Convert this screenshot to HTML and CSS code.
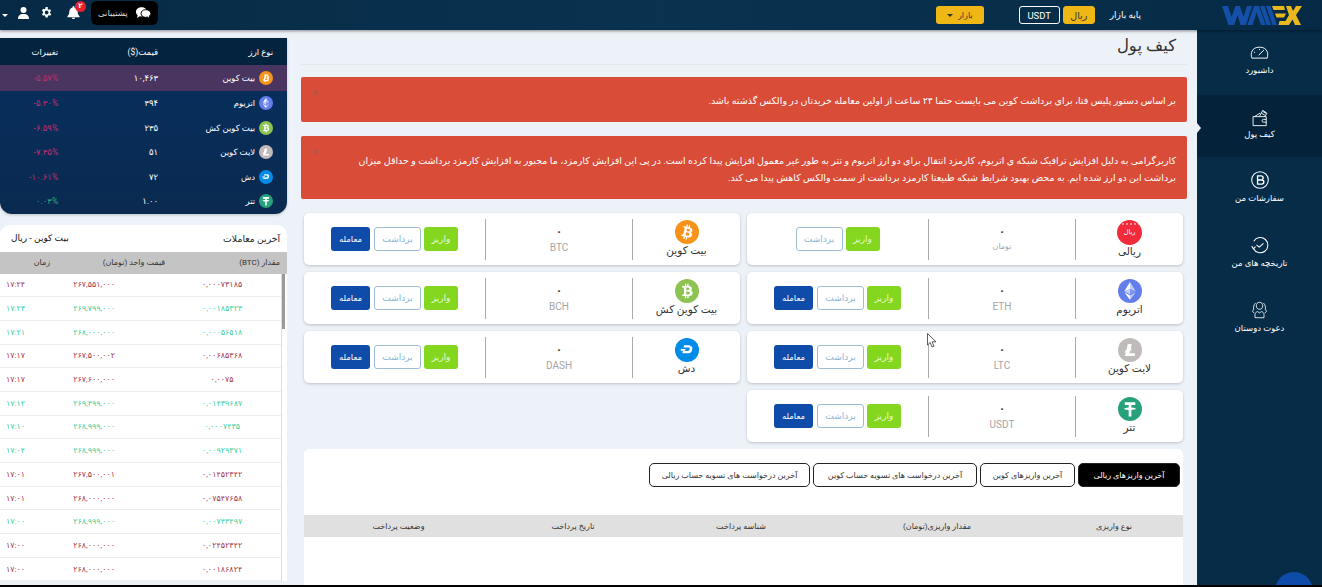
FILE: index.html
```html
<!DOCTYPE html>
<html lang="fa" dir="rtl">
<head>
  <meta charset="UTF-8">
  <title>کیف پول</title>
  <link rel="stylesheet" href="styles.css">
</head>
<body>
  <svg class="sprites" width="0" height="0">
    <symbol id="btc" viewBox="0 0 32 32"><circle cx="16" cy="16" r="16" fill="#f7931a"/><path fill="#fff" d="M23.189 14.02c.314-2.096-1.283-3.223-3.465-3.975l.708-2.84-1.728-.43-.69 2.765c-.454-.114-.92-.22-1.385-.326l.695-2.783L15.596 6l-.708 2.839c-.376-.086-.746-.17-1.104-.26l.002-.009-2.384-.595-.46 1.846s1.283.294 1.256.312c.7.175.826.638.805 1.006l-.806 3.235c.048.012.11.03.18.057l-.183-.045-1.13 4.532c-.086.212-.303.531-.793.41.018.025-1.256-.313-1.256-.313l-.858 1.978 2.25.561c.418.105.828.215 1.231.318l-.715 2.872 1.727.43.708-2.84c.472.127.93.245 1.378.357l-.706 2.828 1.728.43.715-2.866c2.948.558 5.164.333 6.097-2.333.752-2.146-.037-3.385-1.588-4.192 1.13-.26 1.98-1.003 2.207-2.538zm-3.95 5.538c-.533 2.147-4.148.986-5.32.695l.95-3.805c1.172.293 4.929.872 4.37 3.11zm.535-5.569c-.487 1.953-3.495.96-4.47.717l.86-3.45c.975.243 4.118.696 3.61 2.733z"/></symbol>
    <symbol id="bch" viewBox="0 0 32 32"><circle cx="16" cy="16" r="16" fill="#8dc351"/><path fill="#fff" transform="rotate(-14 16 16)" d="M23.189 14.02c.314-2.096-1.283-3.223-3.465-3.975l.708-2.84-1.728-.43-.69 2.765c-.454-.114-.92-.22-1.385-.326l.695-2.783L15.596 6l-.708 2.839c-.376-.086-.746-.17-1.104-.26l.002-.009-2.384-.595-.46 1.846s1.283.294 1.256.312c.7.175.826.638.805 1.006l-.806 3.235c.048.012.11.03.18.057l-.183-.045-1.13 4.532c-.086.212-.303.531-.793.41.018.025-1.256-.313-1.256-.313l-.858 1.978 2.25.561c.418.105.828.215 1.231.318l-.715 2.872 1.727.43.708-2.84c.472.127.93.245 1.378.357l-.706 2.828 1.728.43.715-2.866c2.948.558 5.164.333 6.097-2.333.752-2.146-.037-3.385-1.588-4.192 1.13-.26 1.98-1.003 2.207-2.538zm-3.95 5.538c-.533 2.147-4.148.986-5.32.695l.95-3.805c1.172.293 4.929.872 4.37 3.11zm.535-5.569c-.487 1.953-3.495.96-4.47.717l.86-3.45c.975.243 4.118.696 3.61 2.733z"/></symbol>
    <symbol id="eth" viewBox="0 0 32 32"><circle cx="16" cy="16" r="16" fill="#627eea"/><g fill="#fff"><polygon points="16,4 16,12.9 23.5,16.2" opacity=".6"/><polygon points="16,4 8.5,16.2 16,12.9"/><polygon points="16,22 16,28 23.5,17.6" opacity=".6"/><polygon points="16,22 8.5,17.6 16,28"/><polygon points="16,20.6 23.5,16.2 16,12.9" opacity=".2"/><polygon points="8.5,16.2 16,20.6 16,12.9" opacity=".6"/></g></symbol>
    <symbol id="ltc" viewBox="0 0 32 32"><circle cx="16" cy="16" r="16" fill="#bfbbbb"/><path fill="#fff" d="M10.427 19.214L9 19.768l.688-2.759 1.444-.58L13.213 8h5.129l-1.519 6.196 1.41-.571-.68 2.75-1.427.571-.848 3.483H23L22.127 24H9.252z"/></symbol>
    <symbol id="usdt" viewBox="0 0 32 32"><circle cx="16" cy="16" r="16" fill="#26a17b"/><path fill="#fff" d="M9 7h14v3.6h-5.2v3.3c3.4.2 5.9.9 5.9 1.7s-2.5 1.5-5.9 1.7V26h-3.6v-8.7c-3.4-.2-5.9-.9-5.9-1.7s2.5-1.5 5.9-1.7v-3.3H9z"/></symbol>
    <symbol id="dash" viewBox="0 0 32 32"><circle cx="16" cy="16" r="16" fill="#008ce7"/><path fill="#fff" d="M19.9 9.5H12l-.6 3.2h7.1c1 0 1.3.5 1 1.6l-.3 1.4c-.2 1.1-.7 1.5-1.8 1.5h-7l-.6 3.2h7.9c3 0 4.3-.9 4.8-3.6l.6-2.8c.4-2.6-1.2-3.5-3.2-3.5z"/><path fill="#fff" d="M8 14.6h6l-.5 2.3H7.5z"/></symbol>
  </svg>

  <header class="topbar">
    <svg class="logo" width="80" height="19" viewBox="0 0 80 19">
      <g fill="#1450a8">
        <polygon points="0,0 6,0 9.5,11 13.5,0 18,0 21.5,11 25,0 30,0 24,19 18.5,19 15.5,9 12,19 6.5,19"/>
        <polygon points="25.5,19 32,0 37,0 43.5,19 39,19 34.5,6.5 30.5,19"/>
        <polygon points="38,0 42.5,0 49,19 44.5,19"/>
        <polygon points="44,0 48.5,0 55,19 50.5,19"/>
      </g>
      <g fill="#eab81e">
        <polygon points="50,0 62,0 63,4 51.5,4"/>
        <polygon points="53,7.5 64,7.5 62,11.5 54.5,11.5"/>
        <polygon points="64,0 69,0 71,5 74,0 80,0 74,9 79,19 73,19 70.5,13.5 67,19 56.5,19 57.5,15 63.5,15 67,9"/>
      </g>
    </svg>
    <span class="base-label">پایه بازار</span>
    <div class="base-switch">
      <button class="base-btn base-active">ریال</button>
      <button class="base-btn">USDT</button>
    </div>
    <button class="market-btn">بازار <span class="caret"></span></button>

    <div class="top-tools">
      <button class="support">
        <svg width="17" height="14" viewBox="0 0 17 14"><g transform="matrix(-1 0 0 1 17 0)"><path fill="#fff" d="M10 1c3.5 0 6 2 6 4.8 0 1.500-.7 2.700-1.800 3.500l.8 3-3-1.800C8 10.800 4.500 9 4.500 5.800 4.500 3 7 1 10 1z"/><path fill="#fff" stroke="#000" d="M6 3.500c2.700 0 4.700 1.700 4.700 4s-2 4-4.700 4c-.7 0-1.300-.1-1.900-.3L1.500 13l.6-2.900C1 9.500.5 8.500.5 7.500c0-2.300 2.500-4 5.500-4z"/></g></svg>
        پشتیبانی
      </button>
      <span class="bell">
        <svg width="13" height="13" viewBox="0 0 14 14"><path fill="#fff" d="M7 0c.6 0 1 .4 1 1v.6c2.200.4 3.500 2.200 3.500 4.400 0 3 1 4 2 5v1H.5v-1c1-1 2-2 2-5 0-2.200 1.300-4 3.500-4.400V1c0-.6.4-1 1-1zM5.200 12.700h3.600C8.700 13.500 8 14 7 14s-1.700-.5-1.800-1.300z"/></svg>
        <span class="badge">۲</span>
      </span>
      <svg class="gear" width="13" height="13" viewBox="0 0 24 24"><path fill="#fff" d="M19.400 13c.1-.3.100-.7.100-1s0-.7-.1-1l2.100-1.600-2-3.500-2.500 1c-.5-.4-1.100-.8-1.700-1L15.300 2h-4l-.4 2.900c-.6.200-1.200.6-1.700 1l-2.500-1-2 3.500L6.700 11c-.1.300-.1.700-.1 1s0 .7.100 1l-2.100 1.600 2 3.500 2.500-1c.5.400 1.100.8 1.700 1l.4 2.900h4l.4-2.900c.6-.2 1.200-.6 1.700-1l2.500 1 2-3.500zM13.300 15.500a3.500 3.500 0 1 1 0-7 3.500 3.500 0 0 1 0 7z" transform="translate(-1)"/></svg>
      <svg class="user" width="11" height="12" viewBox="0 0 11 12"><circle cx="5.5" cy="3" r="3" fill="#fff"/><path fill="#fff" d="M0 12c0-3 1.500-5 5.500-5s5.500 2 5.500 5z"/></svg>
      <span class="caret caret-light"></span>
    </div>
  </header>

  <div class="layout">
    <nav class="sidenav">
      <a class="nav-item nav-first">
        <svg width="19" height="18" viewBox="0 0 26 24"><path d="M2.500 19h21c2-6 .5-15-10.500-15S.5 13 2.500 19zM12 15l7-7M5.500 11H7M13 6.500V8" fill="none" stroke="#fff" stroke-width="1.300"/></svg>
        داشبورد
      </a>
      <a class="nav-item nav-active">
        <svg width="18" height="18" viewBox="0 0 26 26"><path d="M3 11h19v13H3zM22 15h-4a2 2 0 0 0 0 4h4M5 11l8-5M12 11l5-9 6 4-3 5M15 6l5 3M17 3.500l5 3" fill="none" stroke="#fff" stroke-width="1.300"/></svg>
        کیف پول
      </a>
      <a class="nav-item">
        <svg width="18" height="18" viewBox="0 0 26 26"><circle cx="13" cy="13" r="12" fill="none" stroke="#fff" stroke-width="1.500"/><path d="M9.500 7h5a2.800 2.800 0 0 1 0 6h-5 6a2.900 2.900 0 0 1 0 6h-6z" fill="none" stroke="#fff" stroke-width="2"/></svg>
        سفارشات من
      </a>
      <a class="nav-item">
        <svg width="18" height="18" viewBox="0 0 26 26"><path d="M3.500 18A11 11 0 1 0 4 7.500M1 14.500l2.500 4 3-3M8 13l4 3 6-5.500" fill="none" stroke="#fff" stroke-width="1.500"/></svg>
        تاریخچه های من
      </a>
      <a class="nav-item">
        <svg width="17" height="18" viewBox="0 0 26 28"><path d="M13 2c-3.500 0-5 2.500-5 5.500 0 3 2 5.500 5 5.500s5-2.500 5-5.500C18 4.500 16.500 2 13 2zM6 26v-5c0-2.500 2-4 4-4.500l3 2 3-2c2 .5 4 2 4 4.500v5zM7 3C4 6 3 10 4 13l-2 3 3 3M19 3c3 3 4 7 3 10l2 3-3 3" fill="none" stroke="#fff" stroke-width="1.300"/></svg>
        دعوت دوستان
      </a>
    </nav>

    <main class="content">
      <h1 class="page-title">کیف پول</h1>

      <div class="alert alert-short">
        <p>بر اساس دستور پلیس فتا، برای برداشت کوین می بایست حتما ۲۴ ساعت از اولین معامله خریدتان در والکس گذشته باشد.</p>
        <span class="alert-close">×</span>
      </div>
      <div class="alert alert-long">
        <p>کاربرگرامی به دلیل افزایش ترافیک شبکه ی اتریوم، کارمزد انتقال برای دو ارز اتریوم و تتر به طور غیر معمول افزایش پیدا کرده است. در پی این افزایش کارمزد، ما مجبور به افزایش کارمزد برداشت و حداقل میزان برداشت این دو ارز شده ایم. به محض بهبود شرایط شبکه طبیعتا کارمزد برداشت از سمت والکس کاهش پیدا می کند.</p>
        <span class="alert-close">×</span>
      </div>

      <section class="wallets">
        <div class="wallet">
          <div class="wallet-coin">
            <span class="rial-icon">ریال</span>
            <span>ریالی</span>
          </div>
          <div class="wallet-balance"><b>۰</b><span class="unit-fa">تومان</span></div>
          <div class="wallet-actions"><button class="btn-deposit">واریز</button><button class="btn-withdraw">برداشت</button></div>
        </div>
        <div class="wallet">
          <div class="wallet-coin"><svg width="24" height="24"><use href="#btc"/></svg><span>بیت کوین</span></div>
          <div class="wallet-balance"><b>۰</b><span>BTC</span></div>
          <div class="wallet-actions"><button class="btn-deposit">واریز</button><button class="btn-withdraw">برداشت</button><button class="btn-trade">معامله</button></div>
        </div>
        <div class="wallet">
          <div class="wallet-coin"><svg width="24" height="24"><use href="#eth"/></svg><span>اتریوم</span></div>
          <div class="wallet-balance"><b>۰</b><span>ETH</span></div>
          <div class="wallet-actions"><button class="btn-deposit">واریز</button><button class="btn-withdraw">برداشت</button><button class="btn-trade">معامله</button></div>
        </div>
        <div class="wallet">
          <div class="wallet-coin"><svg width="24" height="24"><use href="#bch"/></svg><span>بیت کوین کش</span></div>
          <div class="wallet-balance"><b>۰</b><span>BCH</span></div>
          <div class="wallet-actions"><button class="btn-deposit">واریز</button><button class="btn-withdraw">برداشت</button><button class="btn-trade">معامله</button></div>
        </div>
        <div class="wallet">
          <div class="wallet-coin"><svg width="24" height="24"><use href="#ltc"/></svg><span>لایت کوین</span></div>
          <div class="wallet-balance"><b>۰</b><span>LTC</span></div>
          <div class="wallet-actions"><button class="btn-deposit">واریز</button><button class="btn-withdraw">برداشت</button><button class="btn-trade">معامله</button></div>
        </div>
        <div class="wallet">
          <div class="wallet-coin"><svg width="24" height="24"><use href="#dash"/></svg><span>دش</span></div>
          <div class="wallet-balance"><b>۰</b><span>DASH</span></div>
          <div class="wallet-actions"><button class="btn-deposit">واریز</button><button class="btn-withdraw">برداشت</button><button class="btn-trade">معامله</button></div>
        </div>
        <div class="wallet">
          <div class="wallet-coin"><svg width="24" height="24"><use href="#usdt"/></svg><span>تتر</span></div>
          <div class="wallet-balance"><b>۰</b><span>USDT</span></div>
          <div class="wallet-actions"><button class="btn-deposit">واریز</button><button class="btn-withdraw">برداشت</button><button class="btn-trade">معامله</button></div>
        </div>
      </section>

      <section class="history">
        <div class="tabs">
          <button class="tab tab-active">آخرین واریزهای ریالی</button>
          <button class="tab">آخرین واریزهای کوین</button>
          <button class="tab">آخرین درخواست های تسویه حساب کوین</button>
          <button class="tab">آخرین درخواست های تسویه حساب ریالی</button>
        </div>
        <div class="history-head">
          <span>نوع واریزی</span>
          <span>مقدار واریزی(تومان)</span>
          <span>شناسه پرداخت</span>
          <span>تاریخ پرداخت</span>
          <span>وضعیت پرداخت</span>
        </div>
      </section>
    </main>

    <aside class="market-col">
      <div class="prices">
        <div class="price-row price-head"><span>نوع ارز</span><span>قیمت($)</span><span>تغییرات</span></div>
        <div class="price-row price-hot"><span class="coin"><svg width="14" height="14"><use href="#btc"/></svg>بیت کوین</span><span>۱۰,۴۶۳</span><span class="down ltr">-۵.۵۷%</span></div>
        <div class="price-row"><span class="coin"><svg width="14" height="14"><use href="#eth"/></svg>اتریوم</span><span>۳۹۴</span><span class="down ltr">-۵.۳۰%</span></div>
        <div class="price-row"><span class="coin"><svg width="14" height="14"><use href="#bch"/></svg>بیت کوین کش</span><span>۲۳۵</span><span class="down ltr">-۶.۵۹%</span></div>
        <div class="price-row"><span class="coin"><svg width="14" height="14"><use href="#ltc"/></svg>لایت کوین</span><span>۵۱</span><span class="down ltr">-۷.۳۵%</span></div>
        <div class="price-row"><span class="coin"><svg width="14" height="14"><use href="#dash"/></svg>دش</span><span>۷۲</span><span class="down ltr">-۱۰.۶۱%</span></div>
        <div class="price-row"><span class="coin"><svg width="14" height="14"><use href="#usdt"/></svg>تتر</span><span>۱.۰۰</span><span class="up ltr">۰.۰۳%</span></div>
      </div>

      <div class="trades">
        <div class="trades-title"><span>آخرین معاملات</span><b>بیت کوین - ریال</b></div>
        <div class="trades-head"><span>مقدار (BTC)</span><span>قیمت واحد (تومان)</span><span>زمان</span></div>
        <div class="trades-body">
          <div class="scrollbar"><div class="scroll-thumb"></div></div>
          <div class="trades-list">
            <div class="trade sell"><span>۰,۰۰۰۷۳۱۸۵</span><span>۲۶۷,۵۵۱,۰۰۰</span><span>۱۷:۲۴</span></div>
            <div class="trade buy"><span>۰,۰۰۱۸۵۳۲۳</span><span>۲۶۹,۷۹۹,۰۰۰</span><span>۱۷:۲۳</span></div>
            <div class="trade buy"><span>۰,۰۰۰۵۶۵۱۸</span><span>۲۶۸,۰۰۰,۰۰۰</span><span>۱۷:۲۱</span></div>
            <div class="trade sell"><span>۰,۰۰۶۸۵۳۶۸</span><span>۲۶۷,۵۰۰,۰۰۲</span><span>۱۷:۱۷</span></div>
            <div class="trade sell"><span>۰,۰۰۷۵</span><span>۲۶۷,۶۰۰,۰۰۰</span><span>۱۷:۱۷</span></div>
            <div class="trade buy"><span>۰,۰۱۴۳۹۶۸۷</span><span>۲۶۹,۴۹۹,۰۰۰</span><span>۱۷:۱۲</span></div>
            <div class="trade buy"><span>۰,۰۰۰۷۴۳۵</span><span>۲۶۸,۹۹۹,۰۰۰</span><span>۱۷:۱۰</span></div>
            <div class="trade buy"><span>۰,۰۰۹۲۹۳۷۱</span><span>۲۶۸,۹۹۹,۰۰۰</span><span>۱۷:۰۴</span></div>
            <div class="trade sell"><span>۰,۰۱۴۵۲۳۴۲</span><span>۲۶۷,۵۰۰,۰۰۱</span><span>۱۷:۰۱</span></div>
            <div class="trade sell"><span>۰,۰۷۵۴۷۶۵۸</span><span>۲۶۸,۰۰۰,۰۰۰</span><span>۱۷:۰۱</span></div>
            <div class="trade buy"><span>۰,۰۰۷۴۳۴۹۷</span><span>۲۶۸,۹۹۹,۰۰۰</span><span>۱۷:۰۰</span></div>
            <div class="trade sell"><span>۰,۰۲۴۵۲۳۴۲</span><span>۲۶۸,۰۰۰,۰۰۰</span><span>۱۷:۰۰</span></div>
            <div class="trade sell"><span>۰,۰۰۱۸۶۸۲۴</span><span>۲۶۸,۰۰۰,۰۰۰</span><span>۱۷:۰۰</span></div>
          </div>
        </div>
      </div>
    </aside>
  </div>
  <div class="bottom-line"></div>

  <span class="chat-fab"></span>
  <svg class="cursor" width="10" height="15" viewBox="0 0 10 15"><path d="M.5.5v11.500l2.700-2.500 1.800 4.500 2-.8-1.900-4.400H9z" fill="#fff" stroke="#333" stroke-width=".8"/></svg>
</body>
</html>
```

FILE: styles.css
```css
* {
  box-sizing: border-box;
}

html, body {
  margin: 0;
  height: 587px;
  overflow: hidden;
}

body {
  position: relative;
  font-family: Roboto, "DejaVu Sans", sans-serif;
  font-size: 9px;
  color: #333;
  background-color: #edf2f8;
}

button {
  font-family: inherit;
  cursor: pointer;
}

.sprites {
  display: none;
}

.ltr {
  direction: ltr;
}

/* top bar */
.topbar {
  position: relative;
  z-index: 2;
  display: flex;
  align-items: center;
  height: 30px;
  padding-right: 20px;
  padding-left: 2px;
  color: #fff;
  background: linear-gradient(to left, #062a45, #0a3350 50%, #062a45);
  box-shadow: 0 1px 3px rgba(0, 0, 0, 0.45);
}

.logo {
  margin-left: 81px;
}

.base-label {
  margin-left: 15px;
  font-size: 9px;
}

.base-switch {
  display: flex;
  gap: 3px;
  margin-left: 35px;
}

.base-btn {
  height: 18px;
  padding: 0;
  width: 41px;
  font-size: 9.5px;
  color: #fff;
  background: transparent;
  border: 1px solid #fff;
  border-radius: 3px;
}

.base-active {
  width: 32px;
  color: #333;
  background: #efb716;
  border-color: #efb716;
}

.market-btn {
  display: flex;
  align-items: center;
  justify-content: center;
  gap: 5px;
  width: 48px;
  height: 18px;
  padding: 0;
  font-size: 8px;
  color: #333;
  background: #efb716;
  border: 0;
  border-radius: 3px;
}

.caret {
  width: 0;
  height: 0;
  border-top: 3px solid #333;
  border-right: 3px solid transparent;
  border-left: 3px solid transparent;
}

.caret-light {
  border-top-color: #fff;
}

.top-tools {
  display: flex;
  align-items: center;
  margin-right: auto;
}

.gear {
  margin: 0 14px 5px 11px;
}

.user {
  margin: 0 0 5px 10px;
}

.support {
  display: flex;
  align-items: center;
  gap: 7px;
  width: 67px;
  height: 24px;
  margin-bottom: 5px;
  padding: 0 7px;
  font-size: 8.5px;
  color: #ddd;
  background: #000;
  border: 0;
  border-radius: 6px;
}

.bell {
  position: relative;
  display: flex;
  margin: 0 11px 5px 0;
}

.badge {
  position: absolute;
  top: -5px;
  right: -6px;
  width: 11px;
  height: 11px;
  font-size: 7px;
  font-weight: bold;
  line-height: 11px;
  text-align: center;
  color: #fff;
  background: #e8212f;
  border-radius: 50%;
}

/* page layout */
.layout {
  display: flex;
  height: 555px;
  overflow: hidden;
}

.sidenav {
  flex: 0 0 125px;
  background: #062c48;
}

.nav-item {
  display: flex;
  flex-direction: column;
  align-items: center;
  gap: 4px;
  height: 65px;
  padding-top: 14px;
  font-size: 8.5px;
  line-height: 10px;
  color: #fff;
}

.nav-first {
  gap: 3px;
}

.nav-active {
  position: relative;
  gap: 2px;
  height: 62px;
  background: #04233a;
}

.nav-active::after {
  content: "";
  position: absolute;
  top: 28px;
  left: 0;
  border-top: 5px solid transparent;
  border-bottom: 5px solid transparent;
  border-left: 4px solid #edf2f8;
}

.content {
  flex: 0 0 896px;
  padding-right: 10px;
}

.page-title {
  height: 35px;
  margin: 0 0 12px;
  padding: 3px 11px 0 0;
  font-size: 16.5px;
  font-weight: normal;
  line-height: 26px;
  color: #333;
  border-bottom: 1px solid #e4e8ec;
}

.alert {
  position: relative;
  display: flex;
  align-items: center;
  padding: 0 11px;
  margin-bottom: 14px;
  color: #fff;
  background: #d94c38;
  border-radius: 2px;
}

.alert p {
  margin: 0;
  padding: 4px 0 0 30px;
  font-size: 9.5px;
  line-height: 16.5px;
}

.alert-short {
  height: 45px;
}

.alert-long {
  height: 63px;
}

.alert-close {
  position: absolute;
  top: 9px;
  left: 11px;
  font-size: 12px;
  line-height: 14px;
  color: #a8584c;
}

.wallets {
  display: grid;
  grid-template-columns: 436px 436px;
  grid-auto-rows: 52px;
  gap: 7px;
  margin: 0 4px 7px 3px;
}

.wallet {
  display: flex;
  align-items: center;
  background: #fff;
  border-radius: 5px;
  box-shadow: 0 1px 3px rgba(0, 0, 0, 0.2);
}

.wallet-coin {
  display: flex;
  flex-direction: column;
  align-items: center;
  flex: 0 0 108px;
  height: 41px;
  padding-top: 1px;
  font-size: 10.5px;
  line-height: 13px;
  color: #333;
  border-left: 1px solid #aaa;
}

.wallet-coin svg {
  flex: none;
}

.rial-icon {
  width: 25px;
  height: 25px;
  font-size: 6.5px;
  line-height: 25px;
  text-align: center;
  color: #fff;
  background: radial-gradient(#ff8d96 1px, transparent 1.2px) 0 2px / 4px 4px repeat-x, #f22b3a;
  border-radius: 50%;
}

.wallet-balance {
  display: flex;
  flex-direction: column;
  align-items: center;
  gap: 5px;
  flex: 0 0 147px;
  height: 41px;
  padding-top: 8px;
  font-size: 10px;
  color: #a5a5a5;
  border-left: 1px solid #aaa;
}

.wallet-balance b {
  font-size: 10px;
  line-height: 10px;
  color: #444;
}

.wallet-balance .unit-fa {
  font-size: 8px;
}

.wallet-actions {
  display: flex;
  justify-content: center;
  gap: 3px;
  flex: 1;
}

.wallet-actions button {
  height: 24px;
  padding: 0;
  font-size: 9px;
  border-radius: 3px;
}

.btn-deposit {
  width: 34px;
  color: #e8f8d0;
  background: #84d61f;
  border: 0;
}

.btn-withdraw {
  width: 47px;
  color: #8ab5d5;
  background: #fff;
  border: 1px solid #9dbdd4;
}

.wallet-actions .btn-trade {
  width: 39px;
  margin-right: 1px;
  font-size: 8.5px;
  color: #fff;
  background: #0f4ba8;
  border: 0;
}

.history {
  height: 200px;
  margin: 0 4px 0 3px;
  padding-top: 14px;
  background: #fff;
  border-radius: 5px 5px 0 0;
}

.tabs {
  display: flex;
  gap: 3px;
  height: 24px;
  margin: 0 3px 28px 0;
}

.tab {
  width: 95px;
  padding: 0;
  font-size: 8px;
  color: #333;
  background: #fff;
  border: 1px solid #222;
  border-radius: 5px;
}

.tab-active {
  width: 102px;
  color: #fff;
  background: #000;
}

.tab:nth-child(3) {
  width: 164px;
}

.tab:nth-child(4) {
  width: 161px;
}

.history-head {
  display: grid;
  grid-template-columns: 138px 216px 176px 160px 189px;
  align-items: center;
  height: 22px;
  font-size: 8px;
  text-align: center;
  color: #333;
  background: #e0e0e0;
}

/* left column */
.market-col {
  flex: 0 0 287px;
  margin-right: auto;
  padding-top: 8px;
}

.prices {
  margin-bottom: 11px;
  overflow: hidden;
  color: #fff;
  background: linear-gradient(#063060, #0a2a50);
  border-radius: 0 0 12px 12px;
  box-shadow: 0 1px 3px rgba(0, 0, 0, 0.2);
}

.price-row {
  display: grid;
  grid-template-columns: 115px 100px 1fr;
  align-items: center;
  height: 24.5px;
  padding-right: 14px;
  font-size: 8.5px;
}

.price-head {
  height: 27px;
  background: #04233e;
}

.price-hot {
  height: 26px;
  background: #4a3460;
}

.coin {
  display: flex;
  align-items: center;
  gap: 4px;
}

.down,
.up {
  width: 44px;
  text-align: right;
}

.down {
  color: #c0306e;
}

.up {
  color: #2ea87a;
}

.trades {
  background: #fff;
  border-radius: 10px 10px 0 0;
}

.trades-title {
  display: flex;
  align-items: center;
  justify-content: space-between;
  height: 27px;
  padding: 0 7px 0 11px;
  font-size: 9.3px;
  color: #222;
}

.trades-title b {
  font-size: 9px;
  font-weight: normal;
  color: #111;
}

.trades-head {
  display: grid;
  grid-template-columns: 115px 115px 1fr;
  align-items: center;
  height: 22px;
  padding-right: 7px;
  font-size: 8px;
  color: #333;
  background: #c4c4c4;
}

.trades-body {
  display: flex;
}

.trades-list {
  flex: 1;
}

.trade {
  display: grid;
  grid-template-columns: 118px 138px 1fr;
  align-items: center;
  height: 23.7px;
  font-size: 8px;
  text-align: center;
  border-bottom: 1px solid #eeeeee;
}

.trade span:last-child {
  padding-left: 6px;
}

.sell {
  color: #a83a4c;
}

.buy {
  color: #3fcf9f;
}

.scrollbar {
  flex: 0 0 3px;
  margin-right: 2px;
  border-left: 1px solid #ddd;
}

.scroll-thumb {
  width: 3px;
  height: 55px;
  background: #9a9a9a;
}

/* things over the page */
.chat-fab {
  position: absolute;
  top: 572px;
  left: 1275px;
  width: 38px;
  height: 38px;
  background: #0f4ba8;
  border-radius: 50%;
}

.bottom-line {
  position: relative;
  z-index: 3;
  height: 2px;
  background: #000;
}

.cursor {
  position: absolute;
  top: 333px;
  left: 927px;
}
```
